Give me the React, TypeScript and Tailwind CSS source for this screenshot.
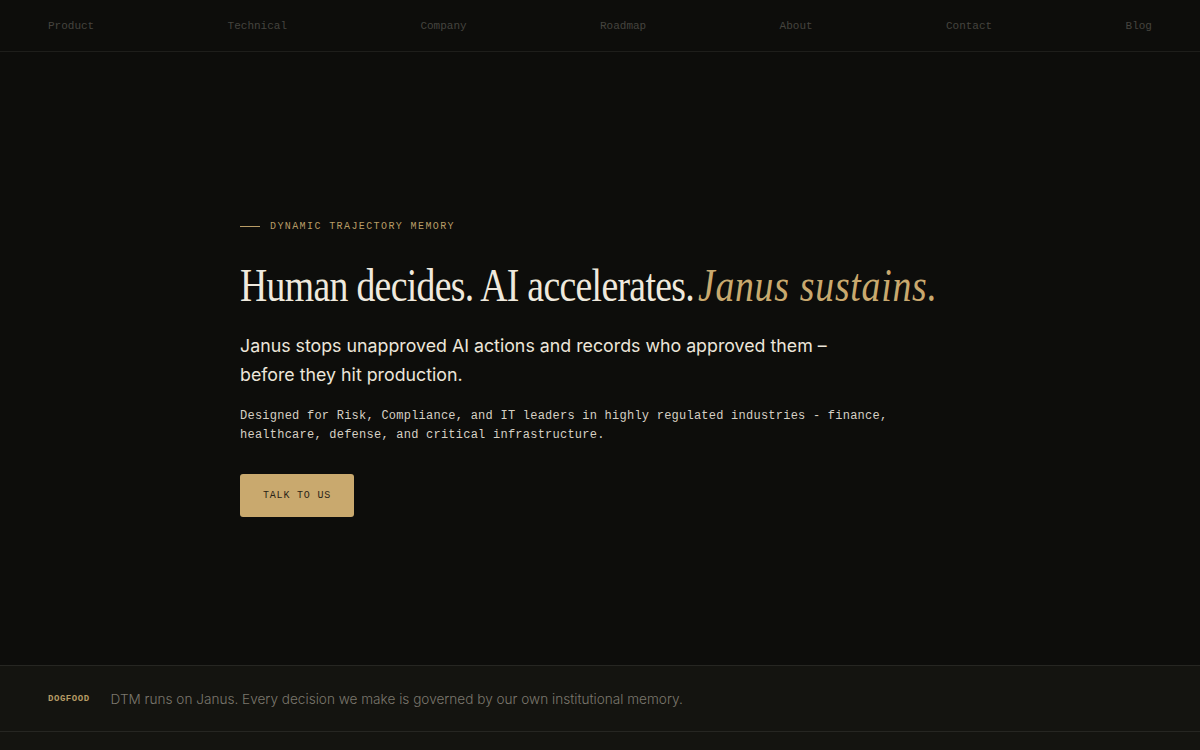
const navItems = ["Product", "Technical", "Company", "Roadmap", "About", "Contact", "Blog"];

const mono = "font-['Liberation_Mono','DejaVu_Sans_Mono',monospace]";

export default function App() {
  return (
    <div className="min-h-[750px] flex flex-col bg-[#0d0d0b] text-[#ece6da] font-['Inter',sans-serif]">
      {/* top nav */}
      <nav className="h-[52px] border-b border-[#1e1e1b] flex items-center justify-between px-12 pt-[2px]">
        {navItems.map((item) => (
          <a key={item} className={`${mono} text-[11px] text-[#45443f]`}>
            {item}
          </a>
        ))}
      </nav>

      {/* hero */}
      <main className="h-[613px] flex flex-col justify-center pl-[240px] pt-[19px]">
        <div className="flex items-center gap-[10px] mb-[24px]">
          <span className="w-5 h-px bg-[#b89c66]" />
          <span className={`${mono} text-[10px] tracking-[0.14em] text-[#b89c66]`}>
            DYNAMIC TRAJECTORY MEMORY
          </span>
        </div>

        <h1 className="font-['Liberation_Serif',serif] text-[46px] leading-[56px] text-[#efe9dd] whitespace-nowrap origin-left scale-x-[0.82] tracking-[-0.018em] mb-[17px]">
          Human decides. AI accelerates.{" "}
          <em className="text-[#c9a96e] tracking-[0.02em] -ml-[6px]">Janus sustains.</em>
        </h1>

        <p className="text-[17.8px] leading-[29px] text-[#ece6da] max-w-[600px] mb-[18px]">
          Janus stops unapproved AI actions and records who approved them –
          before they hit production.
        </p>

        <p className={`${mono} text-[12px] leading-[19px] tracking-[0.02em] text-[#d6d0c4] max-w-[670px] mb-[29px]`}>
          Designed for Risk, Compliance, and IT leaders in highly regulated industries - finance,
          healthcare, defense, and critical infrastructure.
        </p>

        <div>
          <button className={`${mono} h-[43px] px-[23px] rounded-[3px] bg-[#c9a96e] text-[10px] tracking-[0.08em] text-[#2b2417]`}>
            TALK TO US
          </button>
        </div>
      </main>

      {/* dogfood strip */}
      <footer className="flex-1 bg-[#141410] border-t border-[#262622]">
        <div className="h-[66px] border-b border-[#262622] flex items-center gap-[21px] px-12 pt-[2px]">
          <span className={`${mono} text-[9px] font-bold tracking-[0.06em] text-[#b89c66]`}>DOGFOOD</span>
          <span className="text-[13.6px] font-light text-[#7b776d]">
            DTM runs on Janus. Every decision we make is governed by our own institutional memory.
          </span>
        </div>
      </footer>
    </div>
  );
}
